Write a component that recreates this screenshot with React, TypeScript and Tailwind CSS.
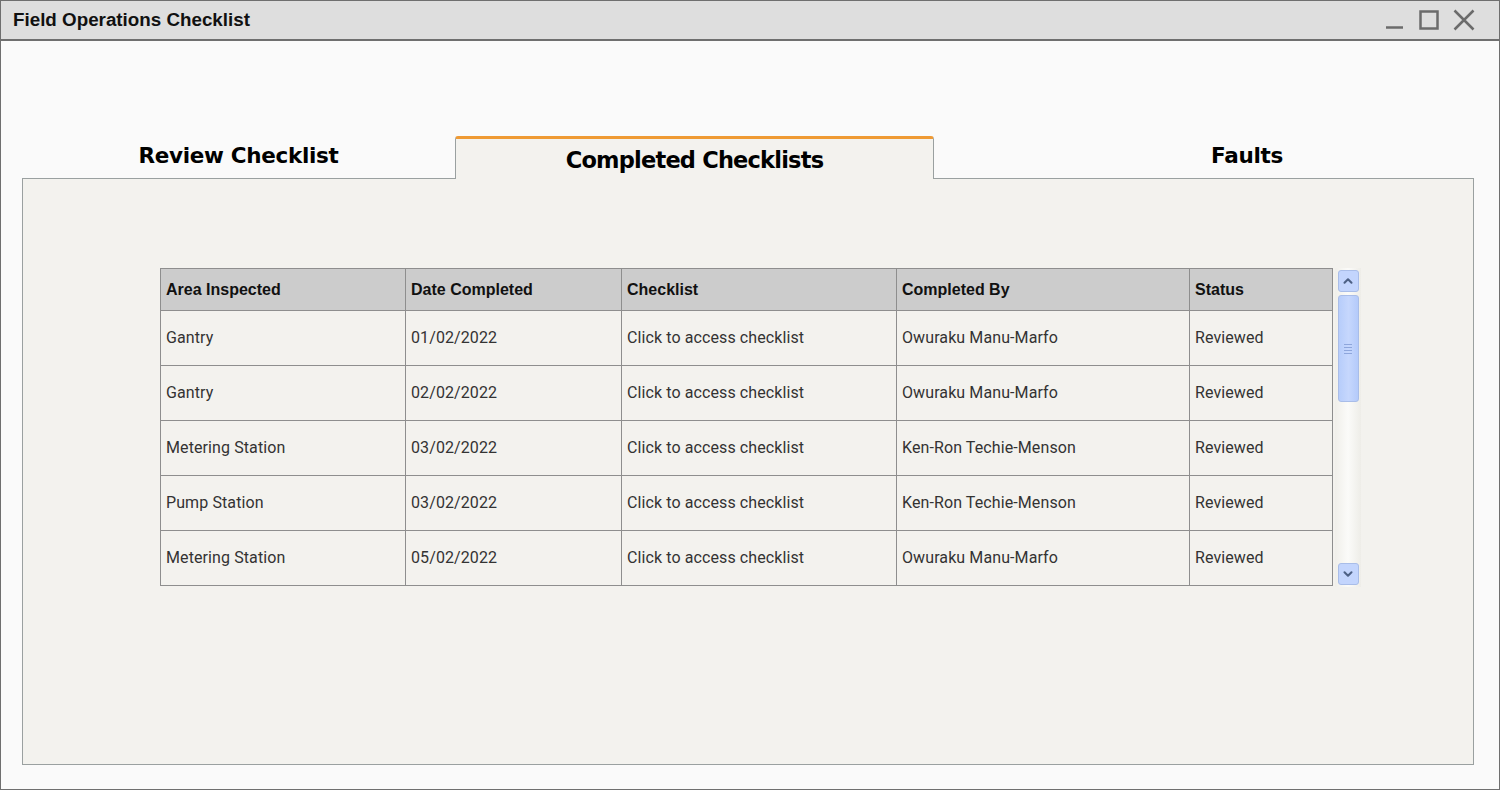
import { ChevronDown, ChevronUp } from 'lucide-react';

const COLUMNS = ['Area Inspected', 'Date Completed', 'Checklist', 'Completed By', 'Status'];

const ROWS: string[][] = [
  ['Gantry', '01/02/2022', 'Click to access checklist', 'Owuraku Manu-Marfo', 'Reviewed'],
  ['Gantry', '02/02/2022', 'Click to access checklist', 'Owuraku Manu-Marfo', 'Reviewed'],
  ['Metering Station', '03/02/2022', 'Click to access checklist', 'Ken-Ron Techie-Menson', 'Reviewed'],
  ['Pump Station', '03/02/2022', 'Click to access checklist', 'Ken-Ron Techie-Menson', 'Reviewed'],
  ['Metering Station', '05/02/2022', 'Click to access checklist', 'Owuraku Manu-Marfo', 'Reviewed'],
];

const GRID = 'grid grid-cols-[245px_216px_275px_293px_143px]';

function ScrollBar() {
  return (
    <div className="ml-[2px] flex h-[319px] w-[26px] flex-col items-center justify-between bg-gradient-to-r from-[#f0efea] via-[#fbfbf9] to-[#eeede8] py-[2px]">
      <div className="flex w-full flex-col items-center gap-[3px]">
        <button className="flex h-[22px] w-[21px] items-center justify-center rounded-[3px] border border-[#a9bde8] bg-[#c3d5fd]">
          <ChevronUp className="h-[14px] w-[14px] text-[#4d6185]" strokeWidth={3.5} />
        </button>
        <div className="flex h-[107px] w-[21px] items-center justify-center rounded-[3px] border border-[#a9bde8] bg-gradient-to-r from-[#b7cdfb] via-[#c6d7fd] to-[#b4cafa]">
          <div className="flex flex-col gap-[2px]">
            <span className="block h-px w-[8px] bg-[#8ea6dc]" />
            <span className="block h-px w-[8px] bg-[#8ea6dc]" />
            <span className="block h-px w-[8px] bg-[#8ea6dc]" />
            <span className="block h-px w-[8px] bg-[#8ea6dc]" />
          </div>
        </div>
      </div>
      <button className="flex h-[22px] w-[21px] items-center justify-center rounded-[3px] border border-[#a9bde8] bg-[#c3d5fd]">
        <ChevronDown className="h-[14px] w-[14px] text-[#4d6185]" strokeWidth={3.5} />
      </button>
    </div>
  );
}

export default function App() {
  return (
    <div className="flex h-[790px] w-[1500px] flex-col border border-[#6f6f6f] bg-[#fafafa] font-['Liberation_Sans',Arial,sans-serif]">
      <header className="flex h-[40px] shrink-0 items-center justify-between border-b-2 border-[#6f6f6f] bg-[#dedede] pl-[12px] pr-[24px]">
        <h1 className="text-[18.8px] font-bold text-[#111]">Field Operations Checklist</h1>
        <div className="flex items-center gap-[14px] text-[#6b6b6b]">
          <svg width="20" height="20" viewBox="0 0 20 20">
            <path d="M1 17.5h17" stroke="currentColor" strokeWidth="2.5" />
          </svg>
          <svg width="20" height="20" viewBox="0 0 20 20">
            <rect x="1.5" y="1.5" width="17" height="17" fill="none" stroke="currentColor" strokeWidth="2.5" />
          </svg>
          <svg width="22" height="22" viewBox="0 0 22 22">
            <path d="M1.5 1.5l19 19M20.5 1.5l-19 19" stroke="currentColor" strokeWidth="2.5" />
          </svg>
        </div>
      </header>

      <div className="flex flex-1 flex-col pl-[21px] pr-[25px] pt-[95px] pb-[24px]">
        <div className="relative z-10 -mb-px flex h-[43px] font-['DejaVu_Sans',Verdana,sans-serif] font-bold text-black">
          <div className="flex w-[433px] items-center justify-center pb-[2px] text-[21.5px] tracking-[-0.3px]">
            Review Checklist
          </div>
          <div className="flex w-[479px] items-center justify-center rounded-t-[3px] border-x border-t-[3px] border-x-[#9aa0a0] border-t-[#ef9a34] bg-[#f3f2ee] pt-[4px] text-[22.5px] tracking-[-0.8px]">
            Completed Checklists
          </div>
          <div className="flex flex-1 items-center justify-center pb-[2px] pl-[86px] text-[21.5px] tracking-[-0.3px]">
            Faults
          </div>
        </div>

        <section className="flex flex-1 border border-[#9aa0a0] bg-[#f3f2ee] pl-[137px] pt-[89px]">
          <div className="flex items-start">
            <div className="border-r border-b border-[#8e8e8e]">
              <div className={`${GRID} h-[42px] bg-[#cccccc] text-[16px] font-bold text-[#111]`}>
                {COLUMNS.map((col) => (
                  <div key={col} className="flex items-center border-l border-t border-[#8e8e8e] px-[5px]">
                    {col}
                  </div>
                ))}
              </div>
              {ROWS.map((row, i) => (
                <div key={i} className={`${GRID} h-[55px] font-['Roboto',sans-serif] text-[16px] tracking-[0.1px] text-[#333]`}>
                  {row.map((cell, j) => (
                    <div key={j} className="flex items-center border-l border-t border-[#8e8e8e] px-[5px]">
                      {cell}
                    </div>
                  ))}
                </div>
              ))}
            </div>
            <ScrollBar />
          </div>
        </section>
      </div>
    </div>
  );
}
